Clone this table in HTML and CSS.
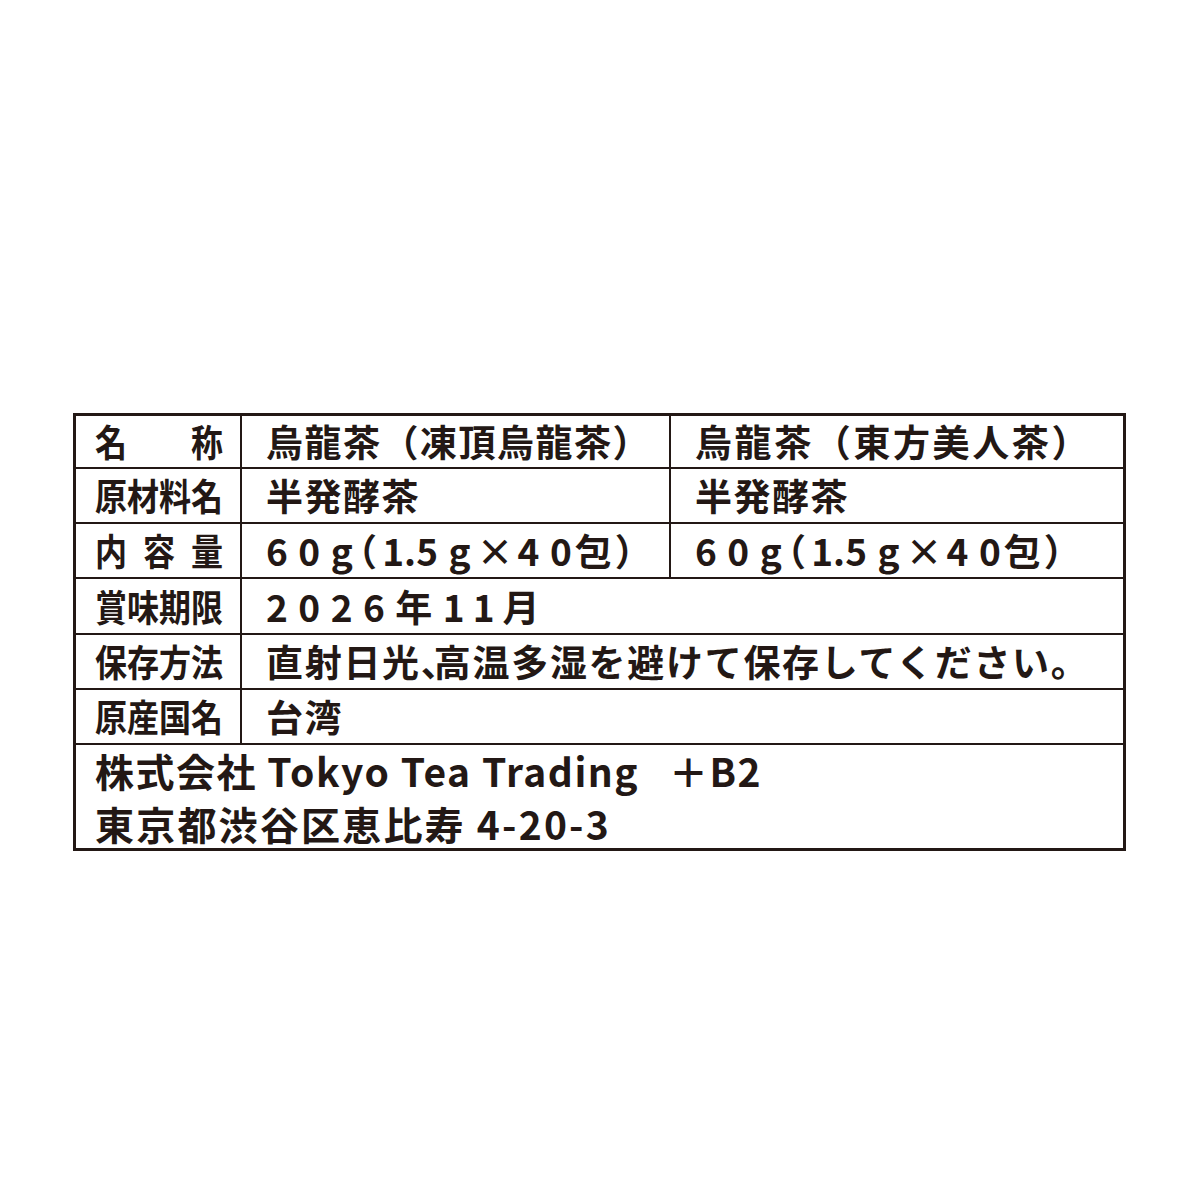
FILE: index.html
```html
<!DOCTYPE html>
<html lang="ja">
<head>
<meta charset="utf-8">
<title>一括表示</title>
<link rel="stylesheet" href="styles.css">
</head>
<body>
<div class="label-table">
  <div class="cell head"><span class="lbl"><span>名</span><span>称</span></span></div>
  <div class="cell val">烏龍茶（凍頂烏龍茶）</div>
  <div class="cell val val-wide">烏龍茶（東方美人茶）</div>

  <div class="cell head"><span class="lbl"><span>原</span><span>材</span><span>料</span><span>名</span></span></div>
  <div class="cell val">半発酵茶</div>
  <div class="cell val">半発酵茶</div>

  <div class="cell head"><span class="lbl"><span>内</span><span>容</span><span>量</span></span></div>
  <div class="cell val num"><span class="tr">60</span><span class="tg">g</span><span class="pl">（</span>1.<span class="tr">5</span><span class="tg2">g</span><span class="tx">×</span><span class="tr">4</span><span class="t6">0包</span>）</div>
  <div class="cell val num"><span class="tr">60</span><span class="tg">g</span><span class="pl">（</span>1.<span class="tr">5</span><span class="tg2">g</span><span class="tx">×</span><span class="tr">4</span><span class="t6">0包</span>）</div>

  <div class="cell head"><span class="lbl"><span>賞</span><span>味</span><span>期</span><span>限</span></span></div>
  <div class="cell val num span2"><span class="tr">2026年</span><span class="t8">11</span>月</div>

  <div class="cell head"><span class="lbl"><span>保</span><span>存</span><span>方</span><span>法</span></span></div>
  <div class="cell val val-long span2">直射日光<span class="tc">、</span>高温多湿を避けて保存してください。</div>

  <div class="cell head"><span class="lbl"><span>原</span><span>産</span><span>国</span><span>名</span></span></div>
  <div class="cell val span2">台湾</div>

  <div class="cell foot">
    <div class="foot-in">
      <div class="foot-line">株式会社 Tokyo Tea Trading<span class="gap"></span>＋B2</div>
      <div class="foot-line foot-addr">東京都渋谷区恵比寿 4-20-3</div>
    </div>
  </div>
</div>
</body>
</html>
```

FILE: styles.css
```css
html, body {
  margin: 0;
  padding: 0;
  background: #ffffff;
}

body {
  font-family: "Noto Sans CJK JP", sans-serif;
  color: #231815;
  width: 1200px;
  height: 1200px;
}

.label-table {
  margin: 413px 0 0 73px;
  width: 1053px;
  box-sizing: border-box;
  border: 3px solid #231815;
  background: #231815;
  display: grid;
  grid-template-columns: 164px 427px 1fr;
  grid-template-rows: 51px 53px 53px 54px 53px 53px 103px;
  gap: 2px;
}

.cell {
  background: #ffffff;
  display: flex;
  align-items: center;
  font-size: 37px;
  font-weight: 700;
  line-height: 1.2;
  white-space: nowrap;
}

.head {
  padding-left: 19px;
}

.lbl {
  display: flex;
  justify-content: space-between;
  width: 148px;
  margin-right: -20px;
  flex: none;
  transform: scaleX(0.865);
  transform-origin: left center;
}

.val {
  padding-left: 24px;
  letter-spacing: 1.5px;
}

.val-wide {
  letter-spacing: 2.6px;
}

.val-long {
  letter-spacing: 1.7px;
}

.span2 {
  grid-column: 2 / 4;
}

.num {
  letter-spacing: 0;
}

.tr {
  letter-spacing: 10.5px;
}

.tg {
  letter-spacing: 4px;
}

.tg2 {
  letter-spacing: 6px;
}

.t8 {
  letter-spacing: 8px;
}

.tx {
  letter-spacing: 4px;
}

.t6 {
  letter-spacing: 3px;
}

.pl {
  font-feature-settings: "palt";
  letter-spacing: 7px;
}

.tc {
  letter-spacing: -24px;
}

.foot {
  grid-column: 1 / 4;
  padding-left: 19px;
}

.foot-in {
  font-size: 39px;
  letter-spacing: 1.5px;
}

.foot-line {
  line-height: 53px;
}

.foot-addr {
  letter-spacing: 2.2px;
}

.gap {
  display: inline-block;
  width: 30px;
}
```
